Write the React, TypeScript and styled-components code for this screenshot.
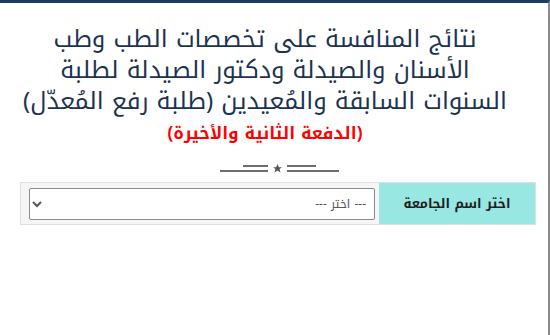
import React from 'react'
import styled, { createGlobalStyle } from 'styled-components'

const GlobalStyle = createGlobalStyle`
  html, body {
    margin: 0;
    padding: 0;
    background: #ffffff;
  }
  body {
    font-family: "Noto Kufi Arabic", "Noto Sans Arabic", "DejaVu Sans", sans-serif;
  }
`

const Page = styled.div`
  direction: rtl;
  width: 550px;
  height: 335px;
  box-sizing: border-box;
  border-top: 3px solid #1e3d5e;
  border-right: 2px solid #8a8a8a;
  overflow: hidden;
`

const Header = styled.header`
  text-align: center;
  padding: 21px 18px 0 0;
`

const Title = styled.h1`
  margin: 0;
  font-size: 24px;
  font-weight: 400;
  line-height: 31px;
  white-space: nowrap;
  color: #1b3350;
`

const Sub = styled.h2`
  margin: 5px 0 0 0;
  font-size: 17px;
  font-weight: 700;
  line-height: 22px;
  color: #ff0000;
`

const Divider = styled.div`
  display: flex;
  justify-content: center;
  align-items: center;
  gap: 4px;
  margin: 19px 0 8px 10px;
  direction: ltr;
`

const Lines = styled.div<{ $side: 'left' | 'right' }>`
  display: flex;
  flex-direction: column;
  align-items: ${p => (p.$side === 'left' ? 'flex-end' : 'flex-start')};
  gap: 3px;
`

const Line = styled.span<{ $w: number }>`
  display: block;
  height: 2px;
  width: ${p => p.$w}px;
  background: #6e6e6e;
`

const Form = styled.div`
  display: flex;
  margin: 0 12px 0 20px;
  border: 1px solid #e0e0e0;
  background: #f6f6f6;
  height: 43px;
  box-sizing: border-box;
`

const Label = styled.label`
  width: 156px;
  flex: none;
  display: flex;
  align-items: center;
  justify-content: center;
  background: #98e7e2;
  font-size: 13px;
  font-weight: 700;
  color: #1e1e1e;
`

const Cell = styled.div`
  flex: 1;
  display: flex;
  align-items: center;
  padding: 0 4px 0 8px;
`

const Select = styled.select`
  width: 100%;
  height: 32px;
  box-sizing: border-box;
  border: 1px solid #8c8c8c;
  border-radius: 2px;
  background: #ffffff;
  color: #555555;
  font-family: "Noto Kufi Arabic", "Noto Sans Arabic", "DejaVu Sans", sans-serif;
  font-size: 12px;
  padding: 0 4px;
`

export default function App() {
  return (
    <>
      <GlobalStyle />
      <Page>
        <Header>
          <Title>
            نتائج المنافسة على تخصصات الطب وطب
            <br />
            الأسنان والصيدلة ودكتور الصيدلة لطلبة
            <br />
            السنوات السابقة والمُعيدين (طلبة رفع المُعدّل)
          </Title>
          <Sub>(الدفعة الثانية والأخيرة)</Sub>
        </Header>
        <Divider>
          <Lines $side="left">
            <Line $w={25} />
            <Line $w={48} />
          </Lines>
          <svg width="11" height="11" viewBox="0 0 24 24">
            <path
              d="M12 2l3 7h7l-5.6 4.3 2.1 7.2L12 16.3 5.5 20.5l2.1-7.2L2 9h7z"
              fill="#555555"
            />
          </svg>
          <Lines $side="right">
            <Line $w={29} />
            <Line $w={52} />
          </Lines>
        </Divider>
        <Form>
          <Label htmlFor="uni">اختر اسم الجامعة</Label>
          <Cell>
            <Select id="uni" defaultValue="">
              <option value="">--- اختر ---</option>
            </Select>
          </Cell>
        </Form>
      </Page>
    </>
  )
}
